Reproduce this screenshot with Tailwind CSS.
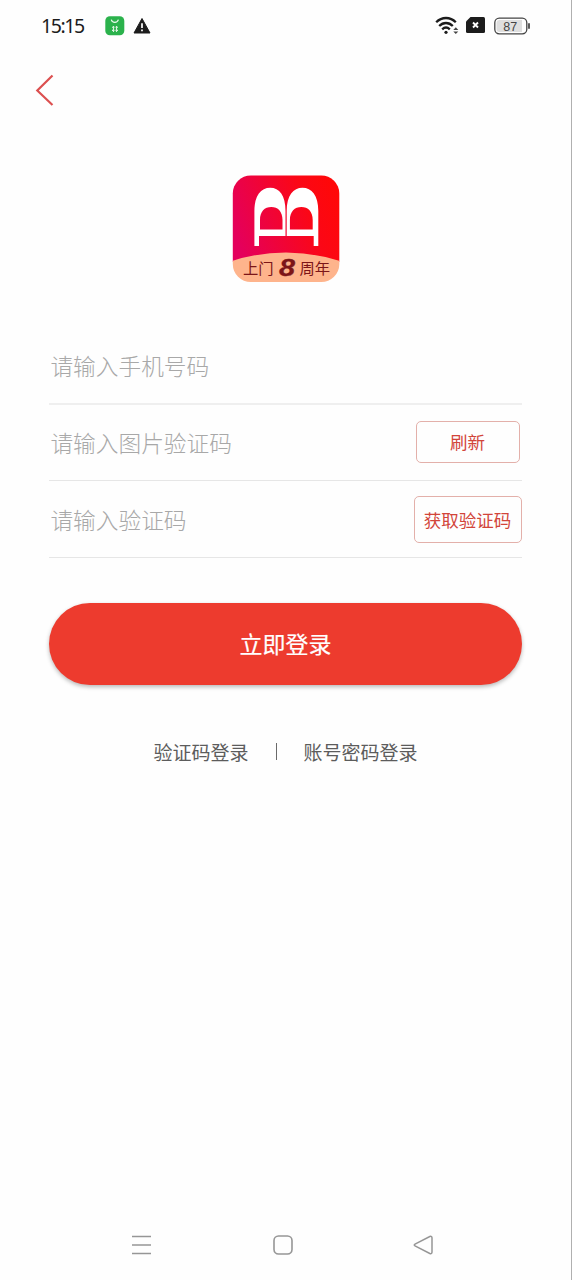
<!DOCTYPE html>
<html lang="zh-CN">
<head>
<meta charset="utf-8">
<title>登录</title>
<script src="https://cdn.jsdelivr.net/npm/@tailwindcss/browser@4"></script>
</head>
<body class="bg-[#fefefe] font-['Noto_Sans_CJK_SC',sans-serif]">
<div class="flex h-[1280px] w-[572px] flex-col overflow-hidden border-r border-[#b0b0b0] bg-[#fefefe]">
  <header class="flex h-[52px] items-center justify-between pl-[41px] pr-[40.500px]">
    <div class="flex items-center">
      <span class="w-[64px] font-['Noto_Sans',sans-serif] text-[19.500px] leading-none tracking-[-1.400px] text-[#1c1c1c]">15:15</span>
      <svg class="h-[20px] w-[20px]" viewBox="0 0 20 20" fill="none">
        <rect x=".3" y=".3" width="19" height="19" rx="4.500" fill="#2bb24c"/>
        <path d="M6.300 3.600C7.200 7.200 12.400 7.200 13.400 3.600" stroke="#e9f9ec" stroke-width="1.200"/>
        <path d="M7 11.200h2.500M10.500 11.200h2.500M7 14.400h2.500M10.500 14.400h2.500M8.500 10v6M11.500 10v6" stroke="#d9f3de" stroke-width="1.100"/>
      </svg>
      <svg class="ml-[8px] h-[18px] w-[18px]" viewBox="0 0 18 18">
        <path d="M9 1.500 17 16H1z" fill="#1c1c1c" stroke="#1c1c1c" stroke-linejoin="round"/>
        <path d="M9 6.300v4.600M9 12.400v1.800" stroke="#fff" stroke-width="1.700"/>
      </svg>
    </div>
    <div class="flex items-center">
      <svg class="h-[20px] w-[24px]" viewBox="0 0 24 20" fill="none">
        <path d="M1.200 6.200C6.800 .600 15.200 .600 20.800 6.200M4.200 10C8.200 6 13.800 6 17.800 10M7.200 13.400C9.500 11.200 12.500 11.200 14.800 13.400" stroke="#1c1c1c" stroke-width="2.300"/>
        <circle cx="11" cy="16.300" r="1.600" fill="#1c1c1c"/>
        <path d="M18.300 14h5L20.800 11.300zM18.300 15.400h5l-2.500 2.700z" fill="#444"/>
      </svg>
      <svg class="ml-[7px] h-[16px] w-[19px] -translate-y-px" viewBox="0 0 19 16">
        <path d="M4.500 0H17.500Q19 0 19 1.500V14.500Q19 16 17.500 16H1.500Q0 16 0 14.500V4.500z" fill="#1c1c1c"/>
        <path d="M7 5.500l5 5M12 5.500l-5 5" stroke="#fff" stroke-width="1.900"/>
      </svg>
      <svg class="ml-[9px] h-[18px] w-[37px]" viewBox="0 0 37 18">
        <rect x=".8" y="1.200" width="32" height="15.600" rx="4.500" fill="#fff" stroke="#444" stroke-width="1.300"/>
        <path d="M5.500 3H28V15H5.500Q2.500 15 2.500 12V6Q2.500 3 5.500 3z" fill="#dfdfdf"/>
        <path d="M35 6.200v5.500" stroke="#333" stroke-width="1.600"/>
        <text x="16.300" y="13.500" text-anchor="middle" font-family="Liberation Sans" font-size="12.500" fill="#444">87</text>
      </svg>
    </div>
  </header>

  <nav class="flex h-[76px] items-center pl-[35px]">
    <svg class="h-[32px] w-[20px]" viewBox="0 0 20 32" fill="none"><path d="M17.500 1.500 2.300 16.500 17.500 31" stroke="#dc5050" stroke-width="2.200"/></svg>
  </nav>

  <main class="flex grow flex-col px-[49.400px] pt-[47px]">
    <svg class="ml-[182.600px] h-[108px] w-[108px] shrink-0" viewBox="0 0 108 108">
      <defs>
        <linearGradient id="brand" x1="0" y1=".6" x2="1" y2=".3"><stop offset="0" stop-color="#e4005c"/><stop offset=".7" stop-color="#fb0716"/><stop offset="1" stop-color="#ff0808"/></linearGradient>
        <clipPath id="tile"><rect x=".8" y=".5" width="106.500" height="106.500" rx="18"/></clipPath>
        <clipPath id="band"><path d="M0 86Q54 69 108 86V108H0z"/></clipPath>
      </defs>
      <g clip-path="url(#tile)">
        <path d="M0 0H108V87Q54 70 0 87z" fill="url(#brand)"/>
        <rect width="108" height="108" fill="#feb48c" clip-path="url(#band)"/>
      </g>
      <path fill="#fff" fill-rule="evenodd" d="M22.400 71V36C22.400 20 29 12.700 38.200 12.700S53.500 20 53.500 36V61H27V71zM28 54.500H50.500V45C50.500 36.500 46 32 39.300 32S28 36.500 28 45z"/>
      <path fill="#fff" fill-rule="evenodd" d="M86.300 71V36C86.300 20 79.700 12.700 70.500 12.700S54.700 20 54.700 36V61H81.700V71zM80.700 54.500H57.900V45C57.900 36.500 62.700 32 69.400 32S80.700 36.500 80.700 45z"/>
      <g fill="#7c1518" font-family="Noto Sans CJK SC" font-size="15.300" font-weight="400"><text x="11" y="99">上门</text><text x="67.500" y="99">周年</text></g>
      <text x="47" y="100.500" textLength="16" lengthAdjust="spacingAndGlyphs" font-family="Liberation Sans" font-size="24" font-weight="bold" font-style="italic" fill="#7c1518" stroke="#7c1518" stroke-width=".3">8</text>
    </svg>

    <div class="mt-[45px] flex flex-col text-[22.700px] font-light text-[#a8a8a8]">
      <div class="flex h-[77px] items-center border-b-2 border-[#efefef] pl-px pt-[2px]"><span>请输入手机号码</span></div>
      <div class="flex h-[76px] items-center justify-between border-b border-[#e6e6e6] pl-px pr-[2px]"><span class="pt-[2px]">请输入图片验证码</span>
        <button class="h-[42px] w-[104px] -translate-y-px rounded-[5px] border border-[#e3b0aa] pt-[2px] text-[17.500px] font-normal text-[#d2453a]">刷新</button></div>
      <div class="flex h-[77px] items-center justify-between border-b border-[#e6e6e6] pl-px"><span class="pt-[3px]">请输入验证码</span>
        <button class="h-[47px] w-[108px] rounded-[5px] border border-[#e3b0aa] pt-[2px] text-[17.500px] font-normal text-[#d2453a]">获取验证码</button></div>
    </div>

    <button class="mt-[45px] h-[82px] w-full shrink-0 rounded-full bg-[#ed3b2e] pb-px text-[23px] font-normal text-white shadow-[0_2px_4px_rgba(0,0,0,0.28)] [-webkit-text-stroke:0.200px_white]">立即登录</button>

    <div class="mt-[53px] flex items-center justify-center text-[19px] text-[#5c5c5c]">
      <span>验证码登录</span><span class="mx-[27px] h-[17px] w-px -translate-y-px bg-[#6a6a6a]"></span><span>账号密码登录</span>
    </div>
  </main>

  <footer class="flex h-[70px] items-center pl-[131px]">
    <svg class="h-[22px] w-[21px]" viewBox="0 0 21 22"><path d="M1 2.500h19M1 11h19M1 19.500h19" stroke="#969696" stroke-width="1.600"/></svg>
    <svg class="ml-[121px] h-[20px] w-[20px]" viewBox="0 0 20 20" fill="none"><rect x="1" y="1" width="18" height="18" rx="4.500" stroke="#969696" stroke-width="1.600"/></svg>
    <svg class="ml-[120px] h-[20px] w-[20px]" viewBox="0 0 20 20" fill="none"><path d="M2 9.200 16.800 1.500Q19 .800 19 3V17Q19 19.200 16.800 18.500L2 10.800Q.500 10 2 9.200z" stroke="#969696" stroke-width="1.500"/></svg>
  </footer>
</div>
</body>
</html>
